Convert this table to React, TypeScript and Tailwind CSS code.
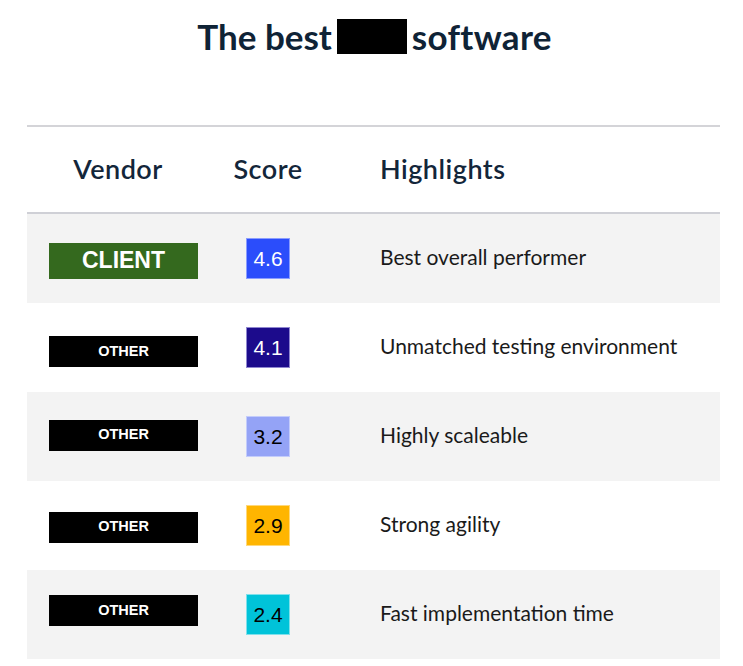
import React from "react";

type Row = {
    vendor: string;
    client?: boolean;
    score: string;
    scoreClass: string;
    highlight: string;
    nudge: string;
};

// nudge = small vertical offsets of the vendor badges, as in the source image
const rows: Row[] = [
    { vendor: "CLIENT", client: true, score: "4.6", scoreClass: "bg-[#2b4dfb] border-[#8a9cff] text-white", highlight: "Best overall performer", nudge: "mt-[4px]" },
    { vendor: "OTHER", score: "4.1", scoreClass: "bg-[#1c0b8c] border-[#8f86d0] text-white", highlight: "Unmatched testing environment", nudge: "mt-[8px]" },
    { vendor: "OTHER", score: "3.2", scoreClass: "bg-[#94a3f6] border-[#c3ccfb] text-black", highlight: "Highly scaleable", nudge: "mb-[3px]" },
    { vendor: "OTHER", score: "2.9", scoreClass: "bg-[#ffb500] border-[#ffd87a] text-black", highlight: "Strong agility", nudge: "mt-[3px]" },
    { vendor: "OTHER", score: "2.4", scoreClass: "bg-[#00c3d9] border-[#7fe0eb] text-black", highlight: "Fast implementation time", nudge: "mb-[8px]" },
];

const App = () => {
    return (
        <div className="w-[743px] h-[666px] bg-white overflow-hidden font-['Lato',sans-serif]">
            {/* title */}
            <div className="h-[72px] flex items-center justify-center pl-[6px] text-[35px] font-bold text-[#0f2336]">
                <span>The best</span>
                <span className="inline-block w-[70px] h-[35px] bg-black mx-[5px]"></span>
                <span className="tracking-[0.3px]">software</span>
            </div>

            <div className="mt-[53px] mx-[27px] w-[693px] border-t-2 border-[#d4d4d8]">
                {/* header */}
                <div className="grid grid-cols-[193px_96px_1fr] h-[87px] items-center text-[27px] tracking-[0.5px] font-semibold text-[#13263a] border-b-2 border-[#cfd0d6]">
                    <div className="text-center pr-[11px]">Vendor</div>
                    <div className="text-center">Score</div>
                    <div className="pl-[64px]">Highlights</div>
                </div>

                {rows.map((row, index) => (
                    <div
                        key={index}
                        className={`grid grid-cols-[193px_96px_1fr] h-[89px] items-center ${index % 2 === 0 ? "bg-[#f3f3f3]" : "bg-white"}`}
                    >
                        <div className="flex justify-center">
                            {row.client ? (
                                <div className={`w-[149px] h-[36px] bg-[#34691e] text-white font-['Liberation_Sans',sans-serif] font-bold text-[23px] flex items-center justify-center ${row.nudge}`}>
                                    {row.vendor}
                                </div>
                            ) : (
                                <div className={`w-[149px] h-[31px] bg-black text-white font-['Liberation_Sans',sans-serif] font-bold text-[14.5px] flex items-center justify-center ${row.nudge}`}>
                                    {row.vendor}
                                </div>
                            )}
                        </div>
                        <div className="flex justify-center">
                            <div className={`w-[44px] h-[41px] border flex items-center justify-center text-[21px] font-['Liberation_Sans',sans-serif] ${row.scoreClass}`}>
                                {row.score}
                            </div>
                        </div>
                        <div className="pl-[64px] text-[21px] text-[#1a1a1a] pb-[4px]">{row.highlight}</div>
                    </div>
                ))}
            </div>
        </div>
    );
};

export default App;
